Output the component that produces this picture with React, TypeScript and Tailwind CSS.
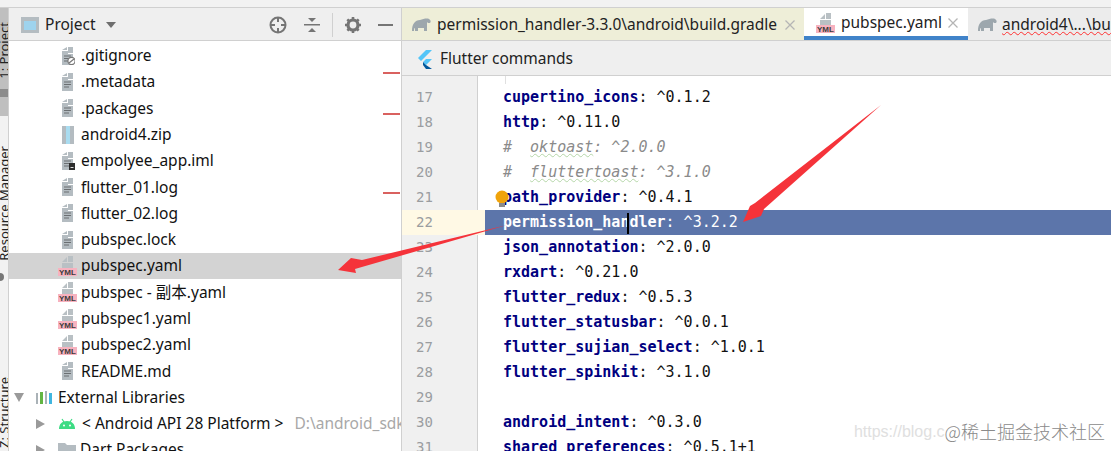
import { ReactNode } from 'react'

const ui = 'font-["Noto_Sans","Noto_Sans_CJK_SC",sans-serif]'

function FileIcon({ badge }: { badge?: ReactNode }) {
  return (
    <svg width="14" height="18" viewBox="0 0 14 18" className="shrink-0">
      <path d="M1 3 L6 3 L6 0 Z M7 0 L12 0 L12 6 L7 6 Z" fill="#b4bcc1" />
      <path d="M1 4 H7 V7 H12 V18 H1 Z" fill="#b4bcc1" />
      <path d="M3 9 H10 M3 11.5 H10 M3 14 H8" stroke="#6b6f72" strokeWidth="1.2" />
      {badge}
    </svg>
  )
}

function YmlIcon() {
  return (
    <svg width="20" height="20" viewBox="0 0 20 20" className="shrink-0">
      <path d="M4 6 L9 1 V6 Z M10 0 H15 V6 H10 Z M4 7 H15 V12 H4 Z" fill="#b9c0c4" />
      <rect x="0" y="12" width="19" height="8" fill="#f7b2bf" />
      <text x="1" y="19" fontSize="8" fontWeight="700" fill="#3c3c3c" fontFamily="Liberation Sans">YML</text>
    </svg>
  )
}

function Elephant() {
  return (
    <svg width="20" height="14" viewBox="0 0 20 14" className="shrink-0">
      <path d="M0 13 C0 6 3 2 8 2 C11 1 15 0 17 1 C19 2 19 4 18 5 L16 5 C16 4 15 4 15 5 V13 H12 V10 H6 V13 H3 V10 C2 10 2 12 2 13 Z" fill="#9da7ad" />
    </svg>
  )
}

function CloseX() {
  return (
    <svg width="10" height="10" viewBox="0 0 10 10" className="shrink-0" stroke="#b5b5b5" strokeWidth="1.3">
      <path d="M0.5 0.5 L9.5 9.5 M9.5 0.5 L0.5 9.5" />
    </svg>
  )
}

function FileRow({ name, icon, active }: { name: string; icon: ReactNode; active?: boolean }) {
  return (
    <div className={`h-[26.3px] flex items-center pl-[48px] ${active ? 'bg-[#d3d3d3]' : ''}`}>
      <div className="w-[24px] flex justify-center pl-[1px] pr-[3px]">{icon}</div>
      <span className="text-[15.5px] text-[#111]">{name}</span>
    </div>
  )
}

const files: { name: string; icon: ReactNode; active?: boolean }[] = [
  { name: '.gitignore', icon: <FileIcon badge={<><circle cx="10.5" cy="14" r="3.6" fill="#fff" stroke="#777" strokeWidth="1.2" /><path d="M8 16 L13 12" stroke="#777" strokeWidth="1.2" /></>} /> },
  { name: '.metadata', icon: <FileIcon /> },
  { name: '.packages', icon: <FileIcon /> },
  {
    name: 'android4.zip',
    icon: (
      <svg width="14" height="18" viewBox="0 0 14 18" className="shrink-0">
        <rect x="1" width="12" height="18" fill="#b4bcc1" />
        <rect x="5" width="4" height="18" fill="#a9dcf0" />
      </svg>
    ),
  },
  { name: 'empolyee_app.iml', icon: <FileIcon badge={<><rect x="8" y="11" width="6" height="7" fill="#2c2c2c" /><rect x="9.5" y="15" width="3" height="1" fill="#ddd" /></>} /> },
  { name: 'flutter_01.log', icon: <FileIcon /> },
  { name: 'flutter_02.log', icon: <FileIcon /> },
  { name: 'pubspec.lock', icon: <FileIcon /> },
  { name: 'pubspec.yaml', icon: <YmlIcon />, active: true },
  { name: 'pubspec - 副本.yaml', icon: <YmlIcon /> },
  { name: 'pubspec1.yaml', icon: <YmlIcon /> },
  { name: 'pubspec2.yaml', icon: <YmlIcon /> },
  { name: 'README.md', icon: <FileIcon /> },
]

type Line = { n: number; key?: string; val?: string; word?: string; rest?: string; selected?: boolean }

const lines: Line[] = [
  { n: 17, key: 'cupertino_icons', val: ' ^0.1.2' },
  { n: 18, key: 'http', val: ' ^0.11.0' },
  { n: 19, word: 'oktoast', rest: ': ^2.0.0' },
  { n: 20, word: 'fluttertoast', rest: ': ^3.1.0' },
  { n: 21, key: 'path_provider', val: ' ^0.4.1' },
  { n: 22, key: 'permission_handler', val: ' ^3.2.2', selected: true },
  { n: 23, key: 'json_annotation', val: ' ^2.0.0' },
  { n: 24, key: 'rxdart', val: ' ^0.21.0' },
  { n: 25, key: 'flutter_redux', val: ' ^0.5.3' },
  { n: 26, key: 'flutter_statusbar', val: ' ^0.0.1' },
  { n: 27, key: 'flutter_sujian_select', val: ' ^1.0.1' },
  { n: 28, key: 'flutter_spinkit', val: ' ^3.1.0' },
  { n: 29 },
  { n: 30, key: 'android_intent', val: ' ^0.3.0' },
  { n: 31, key: 'shared_preferences', val: ' ^0.5.1+1' },
]

function CodeLine({ line }: { line: Line }) {
  return (
    <div className={`h-[25px] flex items-center ${line.selected ? 'bg-[#fff9e5]' : ''}`}>
      <div className="w-[76px] h-full shrink-0 flex items-center pl-[14px] text-[14px] text-[#9a9da0]">
        {line.n}
      </div>
      {line.selected ? (
        <div className="flex-1 ml-[7px] h-full flex items-center pl-[18px] whitespace-pre bg-[#5c75aa] text-white">
          <span className="font-bold">{line.key}</span>:{line.val}
        </div>
      ) : (
        <div className="flex-1 h-full flex items-center pl-[25px] whitespace-pre text-[#111]">
          {line.word ? (
            <span className="italic text-[#8a8a8a]">
              {'#  '}
              <span className="underline decoration-wavy decoration-[#b5d6a8] decoration-1">{line.word}</span>
              {line.rest}
            </span>
          ) : (
            line.key && (
              <>
                <span className="font-bold text-[#000080]">{line.key}</span>:{line.val}
              </>
            )
          )}
        </div>
      )}
    </div>
  )
}

export default function App() {
  return (
    <div className={`relative w-[1111px] h-[451px] overflow-hidden bg-white flex flex-col ${ui}`}>
      <div className="h-[8px] shrink-0 bg-[#f2f2f2] border-b border-[#d0d0d0]" />
      <div className="flex-1 flex min-h-0">
        {/* tool window strip */}
        <div className="w-[9px] shrink-0 bg-[#f2f2f2] border-r border-[#d0d0d0] flex flex-col overflow-hidden text-[13px] text-[#222] leading-[9px]">
          <div className="h-[108px] bg-[#bfbfbf] shrink-0 flex flex-col items-center pt-[14px]">
            <span className="[writing-mode:vertical-rl] rotate-180 whitespace-nowrap">1: Project</span>
            <div className="mt-[10px] w-[8px] h-[8px] bg-[#8c8c8c]" />
          </div>
          <div className="h-[115px] shrink-0 flex justify-center items-end mt-[30px]">
            <span className="[writing-mode:vertical-rl] rotate-180 whitespace-nowrap">Resource Manager</span>
          </div>
          <div className="mt-[12px] ml-[-4px] w-[8px] h-[8px] rounded-full bg-[#777] shrink-0" />
          <div className="h-[75px] shrink-0 flex justify-center items-start mt-[96px]">
            <span className="[writing-mode:vertical-rl] rotate-180 whitespace-nowrap">Z: Structure</span>
          </div>
        </div>

        {/* project panel */}
        <div className="w-[393px] shrink-0 flex flex-col border-r border-[#d0d0d0] overflow-hidden">
          <div className="h-[33px] shrink-0 bg-[#efefef] border-b border-[#d0d0d0] flex items-center pl-[12px] pt-[2px]">
            <svg width="18" height="16" viewBox="0 0 18 16" className="shrink-0">
              <rect width="18" height="16" fill="#b4bcc1" />
              <rect x="3" y="4" width="12" height="9" fill="#9ed3ee" />
            </svg>
            <span className="ml-[6px] text-[15.5px] text-[#222]">Project</span>
            <div className="ml-[10px] w-0 h-0 border-x-[5px] border-x-transparent border-t-[6px] border-t-[#6e6e6e]" />
            <div className="ml-auto flex items-center pr-[8px]">
              <svg width="18" height="18" viewBox="0 0 18 18" fill="none" stroke="#757575" strokeWidth="2">
                <circle cx="9" cy="9" r="7.5" />
                <path d="M9 1 V6 M9 12 V17 M1 9 H6 M12 9 H17" />
              </svg>
              <svg width="16" height="16" viewBox="0 0 16 16" className="ml-[17px]" fill="#757575">
                <path d="M0 7 H16 V8.5 H0 Z M4 1 H12 L8 5 Z M4 15 L8 11 L12 15 Z" />
              </svg>
              <div className="ml-[12px] w-px h-[24px] bg-[#d0d0d0]" />
              <svg width="16" height="16" viewBox="0 0 16 16" className="ml-[12px]">
                <circle cx="8" cy="8" r="5" fill="none" stroke="#757575" strokeWidth="3.2" />
                <path d="M8 0 V16 M0 8 H16 M2.3 2.3 L13.7 13.7 M13.7 2.3 L2.3 13.7" stroke="#757575" strokeWidth="2.6" strokeDasharray="3 10 3" />
              </svg>
              <div className="ml-[17px] w-[15px] h-[2px] bg-[#757575]" />
            </div>
          </div>
          <div className="flex-1 pt-[1.5px]">
            {files.map((f) => (
              <FileRow key={f.name} name={f.name} icon={f.icon} active={f.active} />
            ))}
            <div className="h-[26.3px] flex items-center pl-[5px]">
              <div className="w-0 h-0 border-x-[5px] border-x-transparent border-t-[9px] border-t-[#9a9a9a]" />
              <svg width="18" height="14" viewBox="0 0 18 14" className="ml-[12px] shrink-0">
                <rect x="0" y="2" width="2" height="11" fill="#aab2b7" />
                <rect x="4" y="1" width="3" height="12" fill="#62b543" />
                <rect x="9" y="0" width="2" height="13" fill="#aab2b7" />
                <rect x="13" y="2" width="3" height="11" fill="#40b6e0" />
              </svg>
              <span className="ml-[4px] text-[15.5px] text-[#111]">External Libraries</span>
            </div>
            <div className="h-[26.3px] flex items-center pl-[27px] whitespace-nowrap">
              <div className="w-0 h-0 border-y-[5px] border-y-transparent border-l-[9px] border-l-[#9a9a9a]" />
              <svg width="16" height="12" viewBox="0 0 16 12" className="ml-[14px] shrink-0">
                <path d="M0 11 C0 6 3 3 8 3 C13 3 16 6 16 11 Z" fill="#3ddc84" />
                <path d="M3 1 L5 4 M13 1 L11 4" stroke="#3ddc84" strokeWidth="1.2" />
                <circle cx="5" cy="7.5" r="1" fill="#fff" />
                <circle cx="11" cy="7.5" r="1" fill="#fff" />
              </svg>
              <span className="ml-[7px] text-[15.5px] text-[#111]">&lt; Android API 28 Platform &gt;</span>
              <span className="ml-[11px] text-[15.5px] text-[#a8a8a8]">D:\android_sdk</span>
            </div>
            <div className="h-[26.3px] flex items-center pl-[27px]">
              <div className="w-0 h-0 border-y-[5px] border-y-transparent border-l-[9px] border-l-[#9a9a9a]" />
              <svg width="18" height="14" viewBox="0 0 18 14" className="ml-[13px] shrink-0">
                <path d="M0 0 H7 L9 2 H18 V14 H0 Z" fill="#b4bcc1" />
              </svg>
              <span className="ml-[4px] text-[15.5px] text-[#111]">Dart Packages</span>
            </div>
          </div>
        </div>

        {/* editor */}
        <div className="flex-1 min-w-0 flex flex-col">
          <div className="h-[33px] shrink-0 flex border-b border-[#d0d0d0] bg-[#ececec] whitespace-nowrap text-[15.5px] text-[#222]">
            <div className="w-[402px] shrink-0 bg-[#eeeed8] flex items-center pl-[10px] pt-[2px]">
              <Elephant />
              <span className="ml-[5px]">permission_handler-3.3.0\android\build.gradle</span>
              <div className="ml-auto mr-[9px]">
                <CloseX />
              </div>
            </div>
            <div className="w-[164px] shrink-0 bg-white border-b-[4px] border-[#4083c9] flex items-center pl-[12px] pt-[2px]">
              <YmlIcon />
              <span className="ml-[5px]">pubspec.yaml</span>
              <div className="ml-[6px]">
                <CloseX />
              </div>
            </div>
            <div className="flex-1 flex items-center pl-[10px] pt-[2px] overflow-hidden">
              <Elephant />
              <span className="ml-[4px] underline decoration-wavy decoration-[#ff3030] decoration-1">android4\...\build.gradle</span>
            </div>
          </div>
          <div className="h-[35px] shrink-0 bg-[#efefef] border-b border-[#d0d0d0] flex items-center pl-[15px] pt-[2px]">
            <svg width="15" height="19" viewBox="0 0 15 19" className="shrink-0">
              <path d="M9 0 H15 L4 11 L1 8 Z M9 9 H15 L9 15 L6 12 Z" fill="#54c5f8" />
              <path d="M6 12 L9 15 L15 19 H9 L6 15 Z" fill="#01579b" />
            </svg>
            <span className="ml-[8px] text-[15.5px] text-[#222]">Flutter commands</span>
          </div>
          <div className="flex-1 font-['DejaVu_Sans_Mono',monospace] text-[15px] bg-white relative pt-[9px]">
            <div className="absolute left-0 top-0 bottom-0 w-[76px] bg-[#f0f0f0] border-r border-[#d0d0d0]" />
            <div className="absolute left-[103px] top-0 w-px h-[8px] bg-[#e0e0e0]" />
            <div className="relative">
              {lines.map((l) => (
                <CodeLine key={l.n} line={l} />
              ))}
            </div>
          </div>
        </div>
      </div>

      {/* markers and annotations over the content */}
      <div className="absolute left-[383px] top-[72px] w-[17px] h-[2px] bg-[#d9615f]" />
      <div className="absolute left-[383px] top-[113px] w-[17px] h-[2px] bg-[#d9615f]" />
      <div className="absolute left-[383px] top-[192px] w-[17px] h-[2px] bg-[#d9615f]" />
      <div className="absolute left-[627px] top-[213px] w-[2px] h-[21px] bg-black" />
      <svg className="absolute left-[495px] top-[190px]" width="16" height="20" viewBox="0 0 16 20">
        <circle cx="7" cy="7" r="6.5" fill="#f0a30a" />
        <rect x="4" y="13" width="6" height="4" fill="#8a8a8a" />
      </svg>
      <svg className="absolute inset-0 pointer-events-none" width="1111" height="451" viewBox="0 0 1111 451">
        <polygon points="881,105 755,203 750,206 743,222 761,216 764,209" fill="#f5333a" />
        <polygon points="507,225 362,260 351,258 338,270 356,273 355,269" fill="#f5333a" />
      </svg>
      <div className="absolute right-[6px] bottom-[6px] text-[18px] text-[#8a8a8a] whitespace-nowrap flex items-center">
        <span className="text-[16px] text-[#e0e0e0] font-['Liberation_Sans',sans-serif]">https://blog.c</span>
        <span className="font-['Noto_Sans_CJK_SC',sans-serif] font-light">@稀土掘金技术社区</span>
      </div>
    </div>
  )
}
